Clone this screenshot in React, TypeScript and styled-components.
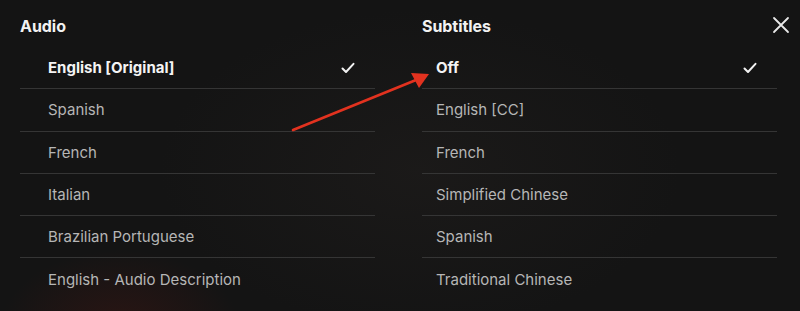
import React from "react";
import styled, { createGlobalStyle } from "styled-components";

const Global = createGlobalStyle`
  html, body { margin: 0; padding: 0; background: #141414; }
  body { font-family: Inter, "Noto Sans", "Liberation Sans", sans-serif; -webkit-font-smoothing: antialiased; }
`;

const Panel = styled.div`
  position: relative;
  width: 800px;
  height: 311px;
  overflow: hidden;
  box-sizing: border-box;
  padding: 16px 0 0 20px;
  background:
    radial-gradient(ellipse 120px 80px at 120px 330px, rgba(70, 22, 18, 0.45), transparent),
    radial-gradient(ellipse 260px 160px at 420px 170px, rgba(40, 36, 34, 0.35), transparent),
    #141414;
  display: grid;
  grid-template-columns: 355px 355px;
  column-gap: 47px;
`;

const Column = styled.section<{ $inset: number }>`
  display: flex;
  flex-direction: column;
  --inset: ${(p) => p.$inset}px;
`;

const Heading = styled.h2`
  margin: 0 0 11px 0;
  font-size: 16px;
  line-height: 20px;
  font-weight: 700;
  color: #f2f2f2;
  letter-spacing: -0.05px;
`;

const List = styled.ul`
  list-style: none;
  margin: 0;
  padding: 0;
`;

const Row = styled.li<{ $selected?: boolean }>`
  box-sizing: border-box;
  height: 42.25px;
  display: flex;
  align-items: center;
  justify-content: space-between;
  padding: 0 20px 0 var(--inset);
  border-bottom: 1px solid #353535;
  font-size: 15px;
  font-weight: ${(p) => (p.$selected ? 700 : 400)};
  color: ${(p) => (p.$selected ? "#f4f4f4" : "#b6b6b6")};
  &:last-child { border-bottom: none; }
`;

const Check = styled.svg`
  width: 14px;
  height: 12px;
  flex: none;
`;

const Close = styled.button`
  position: absolute;
  top: 16px;
  right: 10px;
  width: 18px;
  height: 18px;
  padding: 0;
  border: none;
  background: none;
  cursor: pointer;
`;

const Arrow = styled.svg`
  position: absolute;
  left: 0;
  top: 0;
  width: 800px;
  height: 311px;
  pointer-events: none;
`;

const CheckMark = () => (
  <Check viewBox="0 0 14 12">
    <path d="M1.5 6.5 L5 10 L12.5 1.8" fill="none" stroke="#f2f2f2" strokeWidth="2" strokeLinecap="round" strokeLinejoin="round" />
  </Check>
);

const audio = ["English [Original]", "Spanish", "French", "Italian", "Brazilian Portuguese", "English - Audio Description"];
const subs = ["Off", "English [CC]", "French", "Simplified Chinese", "Spanish", "Traditional Chinese"];

export default function App() {
  return (
    <>
      <Global />
      <Panel>
        <Column $inset={28}>
          <Heading>Audio</Heading>
          <List>
            {audio.map((a, i) => (
              <Row key={a} $selected={i === 0}>
                <span>{a}</span>
                {i === 0 && <CheckMark />}
              </Row>
            ))}
          </List>
        </Column>
        <Column $inset={14}>
          <Heading>Subtitles</Heading>
          <List>
            {subs.map((a, i) => (
              <Row key={a} $selected={i === 0}>
                <span>{a}</span>
                {i === 0 && <CheckMark />}
              </Row>
            ))}
          </List>
        </Column>
        <Close aria-label="Close">
          <svg viewBox="0 0 18 18" width="18" height="18">
            <path d="M2 2 L16 16 M16 2 L2 16" stroke="#e8e8e8" strokeWidth="1.8" strokeLinecap="round" />
          </svg>
        </Close>
        <Arrow viewBox="0 0 800 311">
          <line x1="293" y1="130" x2="416" y2="80" stroke="#e2321f" strokeWidth="2.6" strokeLinecap="round" />
          <polygon points="429,74 411,73 419,88" fill="#e2321f" />
        </Arrow>
      </Panel>
    </>
  );
}
